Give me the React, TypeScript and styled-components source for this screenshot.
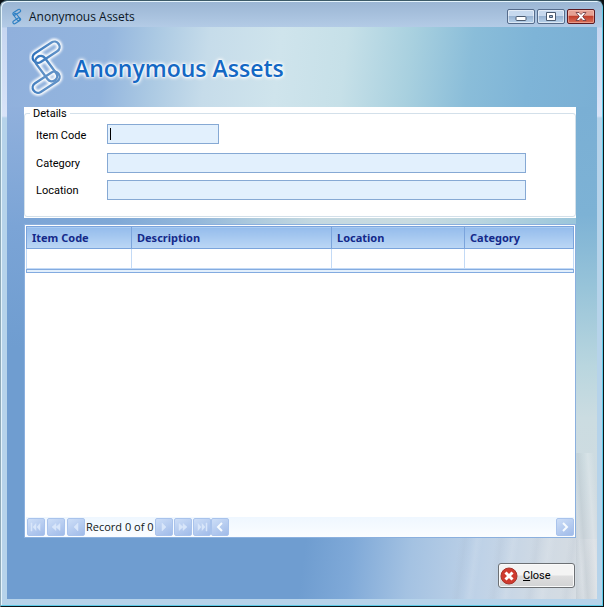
import React from "react";
import styled, { createGlobalStyle, css } from "styled-components";

const uiFont = '"Open Sans", "Noto Sans", sans-serif';
const formFont = 'Roboto, "Liberation Sans", sans-serif';

const GlobalStyle = createGlobalStyle`
  * { box-sizing: border-box; }
  html, body { margin: 0; padding: 0; }
  body { background: #0a1014; }
  button, input { font: inherit; margin: 0; }
`;

const Window = styled.main`
  display: flex;
  flex-direction: column;
  min-height: 100vh;
  padding: 0 6px 7px;
  border: 1px solid #0b1418;
  border-top-color: #3c5a68;
  border-left-color: #8ea9b8;
  border-radius: 7px 7px 0 0;
  background: linear-gradient(to bottom, #9ab5d3, #b3cbe6 26px, #c6d6f0 27px, #d9e4f8 115px, #b6d3ea 117px);
  box-shadow: inset -1px -1px 0 #5ccbe8, inset 1px 1px 0 #e4f4fc;
`;

const TitleBar = styled.header`
  display: flex;
  align-items: center;
  height: 26px;
  padding: 5px 2px 0 3px;
  gap: 4px;
  font: 12px/18px ${uiFont};
  color: #0b1726;
`;

const WindowTitle = styled.span`
  flex: 1;
  margin-left: 1px;
`;

const WindowButtons = styled.div`
  display: flex;
  gap: 2px;
`;

const WindowButton = styled.button<{ $danger?: boolean }>`
  display: flex;
  align-items: center;
  justify-content: center;
  width: 28px;
  height: 15px;
  padding: 0;
  border: 1px solid #566c8c;
  border-radius: 2px;
  background: linear-gradient(#c7d9ee 0 45%, #98b3d2 50%, #b9d3ec);
  box-shadow: inset 0 0 0 1px rgba(255, 255, 255, 0.5);
  ${(p) =>
    p.$danger &&
    css`
      border-color: #5c1a22;
      background: linear-gradient(#e5a193 0 40%, #c2402c 50%, #d8705a);
      box-shadow: inset 0 0 0 1px rgba(255, 210, 200, 0.45);
    `}
`;

const Client = styled.div`
  flex: 1;
  display: flex;
  flex-direction: column;
  padding: 0 21px 11px 17px;
  background:
    linear-gradient(97deg, #90b0dc, #93b5de 17%, #abc9e3 25%, #c6dcea 34%, #cfe4ec 46%, #c6e0e8 57%, #a8d0df 68%, #8abdd9 78%, #7eb4d7 88%, #7aafd4) top / 100% 80px no-repeat,
    linear-gradient(86deg, rgba(150, 165, 175, 0.25), transparent 24%, rgba(150, 165, 175, 0.18) 38%, transparent 56%, rgba(255, 255, 255, 0.2) 70%, transparent 90%) right bottom / 21px 146px no-repeat,
    linear-gradient(to bottom, #7aafd4, #7db2d5 25%, #98c4d9 42%, #b9d6df 60%, #cbdce1 72%, #d2dae0 100%) right top 80px / 21px 432px no-repeat,
    repeating-linear-gradient(98deg, transparent 0 12px, rgba(150, 165, 185, 0.1) 18px, transparent 24px, rgba(255, 255, 255, 0.1) 30px, transparent 36px) right bottom / 150px 61px no-repeat,
    linear-gradient(to bottom, #90b0dc 80px, #7ba4d6 200px, #6f9dd0 320px) left top / 17px 100% no-repeat,
    linear-gradient(97deg, #6f9dd0 50%, #7fa9d8 58%, #a4c2e2 68%, #bfd2e7 80%, #d0dae4 90%, #d8dde1) bottom / 100% 61px no-repeat,
    linear-gradient(to right, #7ba4d6, #7fa8d6 18%, #93b7da 32%, #adcadd 42%, #c4d8e0 52%, #c9dbe0 68%, #b9d5df 80%, #94c2da);
`;

const Brand = styled.div`
  display: flex;
  align-items: center;
  height: 80px;
  padding-left: 5px;
  gap: 9px;
`;

const BrandName = styled.h1`
  margin: 0;
  padding-top: 2px;
  font: 600 23px/32px "Open Sans", "Noto Sans", sans-serif;
  color: #1468c4;
  text-shadow: 0 0 2px #fff, 0 0 3px #fff, 0 0 4px #fff, 0 0 5px #fff;
`;

const DetailsPanel = styled.section`
  padding-bottom: 1px;
  background: #fff;
  font: 11px/13px ${formFont};
  color: #000;
`;

const DetailsGroup = styled.fieldset`
  display: flex;
  flex-direction: column;
  gap: 7px;
  min-width: 0;
  margin: 0;
  padding: 4px 49px 16px 11px;
  border: 1px solid #d3e0ea;
  border-radius: 3px;

  legend {
    margin-left: -6px;
    padding: 0 3px;
  }
`;

const FieldRow = styled.div<{ $first?: boolean }>`
  display: grid;
  grid-template-columns: 71px 1fr;
  align-items: center;
  height: ${(p) => (p.$first ? "22px" : "20px")};
`;

const TextField = styled.input<{ $short?: boolean; $caret?: boolean }>`
  align-self: start;
  width: ${(p) => (p.$short ? "112px" : "100%")};
  height: 20px;
  padding: 0 4px;
  border: 1px solid #86a9d4;
  border-radius: 0;
  outline: none;
  background: ${(p) =>
    p.$caret
      ? "linear-gradient(#000, #000) 2px 3px / 1px 12px no-repeat #e2f0fd"
      : "#e2f0fd"};
  caret-color: transparent;
`;

const GridPanel = styled.section`
  flex: 1;
  display: flex;
  flex-direction: column;
  margin: 6px 0 25px;
  padding: 1px 1px 0;
  border: 1px solid #8bb0de;
  background: #fff;
`;

const AssetTable = styled.table`
  width: 100%;
  table-layout: fixed;
  border-collapse: collapse;
  font: 700 11px/16px "Noto Sans", "DejaVu Sans", sans-serif;

  th {
    height: 22px;
    padding: 0 5px;
    border: 1px solid #7ba4dc;
    text-align: left;
    color: #14298a;
    background: linear-gradient(#94bcec, #bcd7f5);
  }

  td {
    height: 20px;
    padding: 0;
    border: 1px solid #c3daf6;
    background: #fff;
  }
`;

const Column = styled.col<{ $width?: string }>`
  width: ${(p) => p.$width ?? "auto"};
`;

const Splitter = styled.div`
  height: 4px;
  border: 1px solid #83abe0;
  background: #e2effc;
`;

const RecordArea = styled.div`
  flex: 1;
`;

const Navigator = styled.nav`
  display: flex;
  align-items: center;
  height: 20px;
  padding-left: 1px;
  background: linear-gradient(#eff7ff, #fbfdff);
  color: #101820;
`;

const NavGroup = styled.div<{ $tight?: boolean }>`
  display: flex;
  gap: ${(p) => (p.$tight ? "1px" : "2px")};
`;

const RecordLabel = styled.span`
  padding: 0 1px;
  white-space: nowrap;
  font: 11px/18px ${uiFont};
`;

const NavButton = styled.button<{ $end?: boolean; $bright?: boolean }>`
  display: flex;
  align-items: center;
  justify-content: center;
  width: 18px;
  height: 18px;
  padding: 0;
  margin-left: ${(p) => (p.$end ? "auto" : "0")};
  border: 1px solid #a9c3ec;
  border-radius: 2px;
  background: linear-gradient(150deg, #cddef7, #a0bbe9);
  color: ${(p) => (p.$bright ? "#f6fbff" : "#d8e6fa")};
`;

const Footer = styled.footer`
  display: flex;
  justify-content: flex-end;
`;

const CloseButton = styled.button`
  display: flex;
  align-items: center;
  gap: 5px;
  width: 77px;
  height: 25px;
  padding: 0 1px;
  margin-right: 1px;
  border: 1px solid #6c7074;
  border-radius: 3px;
  background: linear-gradient(#f4f4f4 0 48%, #dededf 52%, #d2d3d4);
  box-shadow: inset 0 0 0 1px #fafafa;
  font: 11px/13px ${formFont};
  color: #000;
`;

const ChainLinks = () => (
  <>
    <rect x="2" y="10" width="30" height="10.500" rx="5.200" transform="rotate(-33 17 15)" />
    <rect x="3" y="26.500" width="29" height="10.500" rx="5.200" transform="rotate(53 17.500 31.500)" />
    <rect x="2" y="40" width="30" height="10.500" rx="5.200" transform="rotate(-33 17 45)" />
  </>
);

const ChainMark = ({ width, height, glow }: { width: number; height: number; glow?: boolean }) => (
  <svg width={width} height={height} viewBox="0 0 36 60" fill="none" aria-hidden="true">
    <defs>
      <filter id="halo" x="-30%" y="-30%" width="160%" height="160%">
        <feGaussianBlur stdDeviation="1" />
      </filter>
      <linearGradient id="steel" gradientUnits="userSpaceOnUse" x1="0" y1="0" x2="28" y2="10">
        <stop offset="0" stopColor="#1f68b8" />
        <stop offset="1" stopColor="#5e90c6" />
      </linearGradient>
    </defs>
    {glow && (
      <g stroke="#fff" strokeWidth="6" filter="url(#halo)">
        <ChainLinks />
      </g>
    )}
    <g stroke={glow ? "url(#steel)" : "#2f80c4"} strokeWidth={glow ? 2.4 : 4}>
      <ChainLinks />
    </g>
  </svg>
);

const arrows = {
  first: "M1 2h1v8H1zM6 2.500 3 6l3 3.500zM10 2.500 7 6l3 3.500z",
  fastBack: "M6 2.500 2 6l4 3.500zM10 2.500 6 6l4 3.500z",
  back: "M8 2 4 6l4 4z",
  next: "M4 2l4 4-4 4z",
  fastNext: "M2 2.500l4 3.500-4 3.500zM6 2.500l4 3.500-4 3.500z",
  last: "M10 2h1v8h-1zM2 2.500 5 6 2 9.500zM6 2.500 9 6 6 9.500z",
};

const Arrow = ({ kind }: { kind: keyof typeof arrows }) => (
  <svg width="12" height="12" viewBox="0 0 12 12" fill="currentColor" stroke="currentColor" strokeWidth="0.500" aria-hidden="true">
    <path d={arrows[kind]} />
  </svg>
);

const Chevron = ({ right }: { right?: boolean }) => (
  <svg width="12" height="12" viewBox="0 0 12 12" fill="none" stroke="currentColor" strokeWidth="2" aria-hidden="true">
    <path d={right ? "M4 2l4 4-4 4" : "M8 2 4 6l4 4"} />
  </svg>
);

const columns = [
  { name: "Item Code", width: "105px" },
  { name: "Description", width: "200px" },
  { name: "Location", width: "133px" },
  { name: "Category" },
];

export default function App() {
  return (
    <>
      <GlobalStyle />
      <Window>
        <TitleBar>
          <ChainMark width={14} height={17} />
          <WindowTitle>Anonymous Assets</WindowTitle>
          <WindowButtons>
            <WindowButton aria-label="Minimize">
              <svg width="12" height="11" viewBox="0 0 12 11">
                <rect x="1" y="5.500" width="10" height="4" rx="1" fill="#fff" stroke="#4b5b70" />
              </svg>
            </WindowButton>
            <WindowButton aria-label="Maximize">
              <svg width="12" height="11" viewBox="0 0 12 11">
                <path d="M1.500 1.500h9v8h-9zM4.500 4.500h3v2h-3z" fill="#fff" fillRule="evenodd" stroke="#4b5b70" />
              </svg>
            </WindowButton>
            <WindowButton $danger aria-label="Close window">
              <svg width="12" height="11" viewBox="0 0 12 11">
                <path d="M1 1.500h3l2 2 2-2h3L7.700 5.500 11 9.500H8l-2-2-2 2H1l3.300-4z" fill="#fff" stroke="#66323a" strokeWidth="0.800" />
              </svg>
            </WindowButton>
          </WindowButtons>
        </TitleBar>
        <Client>
          <Brand>
            <ChainMark width={36} height={60} glow />
            <BrandName>Anonymous Assets</BrandName>
          </Brand>
          <DetailsPanel>
            <DetailsGroup>
              <legend>Details</legend>
              <FieldRow $first>
                <label htmlFor="item-code">Item Code</label>
                <TextField id="item-code" $short $caret />
              </FieldRow>
              <FieldRow>
                <label htmlFor="category">Category</label>
                <TextField id="category" />
              </FieldRow>
              <FieldRow>
                <label htmlFor="location">Location</label>
                <TextField id="location" />
              </FieldRow>
            </DetailsGroup>
          </DetailsPanel>
          <GridPanel>
            <AssetTable>
              <colgroup>
                {columns.map((c) => (
                  <Column key={c.name} $width={c.width} />
                ))}
              </colgroup>
              <thead>
                <tr>
                  {columns.map((c) => (
                    <th key={c.name} scope="col">{c.name}</th>
                  ))}
                </tr>
              </thead>
              <tbody>
                <tr>
                  {columns.map((c) => (
                    <td key={c.name} />
                  ))}
                </tr>
              </tbody>
            </AssetTable>
            <Splitter />
            <RecordArea />
            <Navigator aria-label="Records">
              <NavGroup>
                <NavButton aria-label="First record"><Arrow kind="first" /></NavButton>
                <NavButton aria-label="Previous page"><Arrow kind="fastBack" /></NavButton>
                <NavButton aria-label="Previous record"><Arrow kind="back" /></NavButton>
              </NavGroup>
              <RecordLabel>Record 0 of 0</RecordLabel>
              <NavGroup $tight>
                <NavButton aria-label="Next record"><Arrow kind="next" /></NavButton>
                <NavButton aria-label="Next page"><Arrow kind="fastNext" /></NavButton>
                <NavButton aria-label="Last record"><Arrow kind="last" /></NavButton>
              </NavGroup>
              <NavButton $bright aria-label="Scroll left"><Chevron /></NavButton>
              <NavButton $bright $end aria-label="Scroll right"><Chevron right /></NavButton>
            </Navigator>
          </GridPanel>
          <Footer>
            <CloseButton>
              <svg width="18" height="18" viewBox="0 0 18 18" aria-hidden="true">
                <circle cx="9" cy="9" r="8" fill="#cf3a2e" stroke="#a8342c" />
                <path d="M5.500 5.500l7 7M12.500 5.500l-7 7" stroke="#fff" strokeWidth="3" />
              </svg>
              <span><u>C</u>lose</span>
            </CloseButton>
          </Footer>
        </Client>
      </Window>
    </>
  );
}
